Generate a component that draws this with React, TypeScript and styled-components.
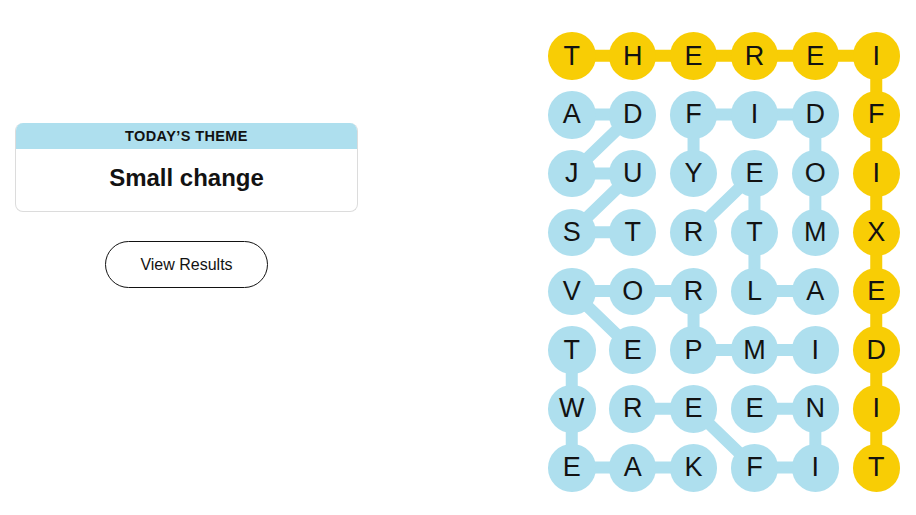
import React from "react";
import styled, { createGlobalStyle } from "styled-components";

const GlobalStyle = createGlobalStyle`
  html, body { margin: 0; padding: 0; background: #ffffff; }
  body { font-family: "Liberation Sans", Arial, sans-serif; color: #121212; }
`;

const BLUE = "#aedfee";
const YELLOW = "#f8cd05";
const CELL = 47.5;
const COL_GAP = 13.4;
const ROW_GAP = 11.33;

const Page = styled.main`
  display: flex;
  justify-content: space-between;
  align-items: flex-start;
  width: 916px;
  height: 515px;
  box-sizing: border-box;
  padding: 0 16px 0 15px;
`;

const SidePanel = styled.section`
  width: 343px;
  padding-top: 123px;
  display: flex;
  flex-direction: column;
  align-items: center;
`;

const ThemeCard = styled.div`
  width: 100%;
  box-sizing: border-box;
  border: 1px solid #dcdcdc;
  border-top: none;
  border-radius: 8px;
  overflow: hidden;
`;

const ThemeLabel = styled.div`
  background: ${BLUE};
  height: 26px;
  display: flex;
  align-items: center;
  justify-content: center;
  font-size: 14.5px;
  font-weight: 700;
  letter-spacing: 0.4px;
  text-transform: uppercase;
  color: #121212;
`;

const ThemeTitle = styled.h1`
  margin: 0;
  padding: 14px 0 18px;
  text-align: center;
  font-size: 24px;
  line-height: 30px;
  font-weight: 700;
  color: #121212;
`;

const ResultsButton = styled.button`
  margin-top: 29px;
  width: 163px;
  height: 47px;
  border: 1px solid #121212;
  border-radius: 24px;
  background: #ffffff;
  font-family: "Liberation Sans", Arial, sans-serif;
  font-size: 16px;
  padding-top: 2px;
  color: #121212;
  cursor: pointer;
`;

const Board = styled.div`
  position: relative;
  margin-top: 32.25px;
  display: grid;
  grid-template-columns: repeat(6, ${CELL}px);
  grid-auto-rows: ${CELL}px;
  column-gap: ${COL_GAP}px;
  row-gap: ${ROW_GAP}px;
`;

const Links = styled.svg`
  position: absolute;
  inset: 0;
  width: 100%;
  height: 100%;
  z-index: 0;
  overflow: visible;
`;

const Tile = styled.div<{ $spangram?: boolean }>`
  position: relative;
  z-index: 1;
  width: ${CELL}px;
  height: ${CELL}px;
  border-radius: 50%;
  background: ${(p) => (p.$spangram ? YELLOW : BLUE)};
  display: flex;
  align-items: center;
  justify-content: center;
  font-size: 27px;
  line-height: 1;
  color: #121212;
`;

const rows = [
  "THEREI",
  "ADFIDF",
  "JUYEOI",
  "STRTMX",
  "VORLAE",
  "TEPMID",
  "WREENI",
  "EAKFIT",
];

type Pt = [number, number];

const yellowPath: Pt[] = [
  [0, 0], [0, 1], [0, 2], [0, 3], [0, 4], [0, 5],
  [1, 5], [2, 5], [3, 5], [4, 5], [5, 5], [6, 5], [7, 5],
];

const bluePaths: Pt[][] = [
  [[1, 0], [1, 1], [2, 0], [2, 1], [3, 0], [3, 1]],
  [[3, 4], [2, 4], [1, 4], [1, 3], [1, 2], [2, 2]],
  [[4, 4], [4, 3], [3, 3], [2, 3], [3, 2]],
  [[5, 4], [5, 3], [5, 2], [4, 2], [4, 1], [4, 0], [5, 1]],
  [[5, 0], [6, 0], [7, 0], [7, 1], [7, 2]],
  [[6, 1], [6, 2], [7, 3], [7, 4], [6, 4], [6, 3]],
];

const cx = (c: number) => CELL / 2 + c * (CELL + COL_GAP);
const cy = (r: number) => CELL / 2 + r * (CELL + ROW_GAP);
const toPoints = (path: Pt[]) => path.map(([r, c]) => `${cx(c)},${cy(r)}`).join(" ");

const spangramSet = new Set(yellowPath.map(([r, c]) => `${r}-${c}`));

export default function App() {
  return (
    <>
      <GlobalStyle />
      <Page>
        <SidePanel>
          <ThemeCard>
            <ThemeLabel>Today’s theme</ThemeLabel>
            <ThemeTitle>Small change</ThemeTitle>
          </ThemeCard>
          <ResultsButton>View Results</ResultsButton>
        </SidePanel>
        <Board>
          <Links aria-hidden="true">
            {bluePaths.map((p, i) => (
              <polyline
                key={i}
                points={toPoints(p)}
                fill="none"
                stroke={BLUE}
                strokeWidth={12}
                strokeLinejoin="round"
              />
            ))}
            <polyline
              points={toPoints(yellowPath)}
              fill="none"
              stroke={YELLOW}
              strokeWidth={12}
              strokeLinejoin="round"
            />
          </Links>
          {rows.map((row, r) =>
            row.split("").map((ch, c) => (
              <Tile key={`${r}-${c}`} $spangram={spangramSet.has(`${r}-${c}`)}>
                {ch}
              </Tile>
            ))
          )}
        </Board>
      </Page>
    </>
  );
}
